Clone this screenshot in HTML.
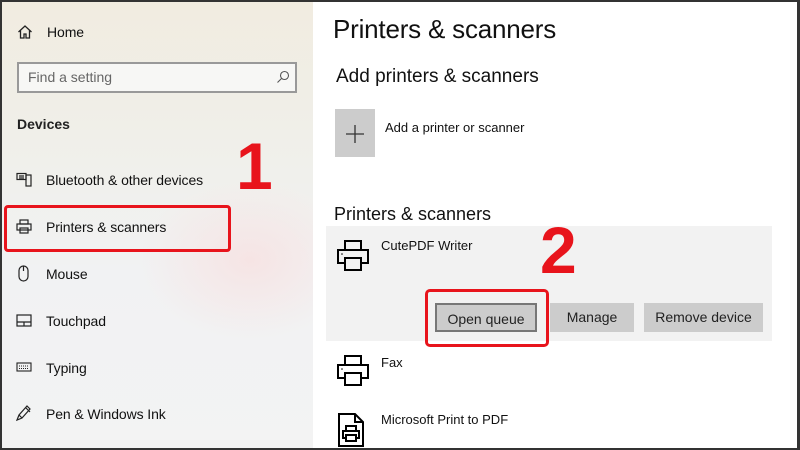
<!DOCTYPE html>
<html><head><meta charset="utf-8"><style>
*{margin:0;padding:0;box-sizing:border-box}
body{width:800px;height:450px;overflow:hidden;font-family:"Liberation Sans",sans-serif;color:#000;position:relative;background:#fff}
.side{position:absolute;left:0;top:0;width:313px;height:450px;background:radial-gradient(ellipse 110px 80px at 250px 260px,#f6e4e4,rgba(246,228,228,0)),linear-gradient(180deg,#f1ece0 0%,#f0efe9 30%,#f1f2f3 60%,#f3f3f3 100%)}
.a{position:absolute;white-space:nowrap}
.t{font-size:14px;color:#111;letter-spacing:-0.1px}
.frame{position:absolute;left:0;top:0;width:800px;height:450px;border:2px solid #333;border-right-width:3px;pointer-events:none}
.btn{position:absolute;top:303px;height:29px;background:#ccc;font-size:14px;text-align:center;line-height:29px;color:#222}
svg{position:absolute}
</style></head><body>
<div class="side"></div>
<svg style="left:17px;top:24px" width="16" height="16" viewBox="0 0 16 16" fill="none" stroke="#222" stroke-width="1.3"><path d="M1.5 8L8 2l6.5 6M3.5 6.5V14h3.5v-4h2v4h3.5V6.5"/></svg>
<div class="a t" style="left:47px;top:24px;font-size:14px">Home</div>
<div class="a" style="left:17px;top:62px;width:280px;height:31px;border:2px solid #999;background:#f7f7f5"></div>
<div class="a" style="left:28px;top:69px;font-size:14px;color:#666">Find a setting</div>
<svg style="left:276px;top:70px" width="14" height="14" viewBox="0 0 14 14" fill="none" stroke="#555" stroke-width="1.1"><circle cx="8.5" cy="5.5" r="4"/><path d="M5.5 8.5L1.5 12.5"/></svg>
<div class="a" style="left:17px;top:116px;font-size:14px;font-weight:bold;color:#222">Devices</div>
<svg style="left:16px;top:172px" width="16" height="16" viewBox="0 0 16 16" fill="none" stroke="#222" stroke-width="1.2"><rect x="1" y="1.5" width="9" height="6"/><rect x="10" y="3" width="5" height="11"/><path d="M3 4h5M3 6h5"/></svg>
<div class="a t" style="left:46px;top:172px">Bluetooth &amp; other devices</div>
<svg style="left:16px;top:219px" width="16" height="16" viewBox="0 0 16 16" fill="none" stroke="#222" stroke-width="1.2"><rect x="4" y="1" width="8" height="4"/><rect x="1" y="5" width="14" height="6"/><rect x="4" y="9" width="8" height="5"/></svg>
<div class="a t" style="left:46px;top:219px">Printers &amp; scanners</div>
<svg style="left:16px;top:265px" width="16" height="18" viewBox="0 0 16 18" fill="none" stroke="#222" stroke-width="1.2"><rect x="3" y="1" width="9" height="15" rx="4.5"/><path d="M7.5 1v5"/></svg>
<div class="a t" style="left:46px;top:266px">Mouse</div>
<svg style="left:16px;top:313px" width="16" height="16" viewBox="0 0 16 16" fill="none" stroke="#222" stroke-width="1.2"><rect x="1" y="2" width="14" height="11"/><path d="M1 9h14M8 9v4"/></svg>
<div class="a t" style="left:46px;top:313px">Touchpad</div>
<svg style="left:16px;top:361px" width="16" height="14" viewBox="0 0 16 14" fill="none" stroke="#222" stroke-width="1.1"><rect x="1" y="2" width="14" height="8"/><path d="M3 5h10M3 7.5h10" stroke-dasharray="1 1"/></svg>
<div class="a t" style="left:46px;top:360px">Typing</div>
<svg style="left:15px;top:404px" width="18" height="18" viewBox="0 0 18 18" fill="none" stroke="#222" stroke-width="1.2"><path d="M2 16l2-5 8-9 3 3-8 9zM4 11l3 3M11 4l4 4"/></svg>
<div class="a t" style="left:46px;top:406px">Pen &amp; Windows Ink</div>
<div class="a" style="left:4px;top:205px;width:227px;height:47px;border:3px solid #e8141c;border-radius:4px"></div>
<div class="a" style="left:236px;top:128px;font-size:66px;font-weight:bold;color:#e8141c">1</div>

<div class="a" style="left:333px;top:14px;font-size:26px;color:#111;letter-spacing:-0.2px">Printers &amp; scanners</div>
<div class="a" style="left:336px;top:66px;font-size:19px;color:#111">Add printers &amp; scanners</div>
<div class="a" style="left:335px;top:109px;width:40px;height:48px;background:#ccc"></div>
<svg style="left:345px;top:124px" width="20" height="20" viewBox="0 0 20 20" stroke="#333" stroke-width="1.3"><path d="M10 1v18M1 10h18"/></svg>
<div class="a" style="left:385px;top:120px;font-size:13px;color:#111">Add a printer or scanner</div>
<div class="a" style="left:334px;top:204px;font-size:18px;color:#111">Printers &amp; scanners</div>
<div class="a" style="left:326px;top:226px;width:446px;height:115px;background:#f2f2f2"></div>
<svg style="left:336px;top:240px" width="34" height="32" viewBox="0 0 34 32" fill="none" stroke="#000" stroke-width="2"><rect x="9" y="1" width="16" height="9"/><rect x="2" y="10" width="30" height="13"/><rect x="9" y="18" width="16" height="12" fill="#f2f2f2"/><circle cx="6" cy="14" r=".8" fill="#000" stroke="none"/></svg>
<div class="a" style="left:381px;top:238px;font-size:13px;color:#111">CutePDF Writer</div>
<div class="btn" style="left:435px;width:102px;border:2px solid #777">Open queue</div>
<div class="btn" style="left:550px;width:84px">Manage</div>
<div class="btn" style="left:644px;width:119px">Remove device</div>
<div class="a" style="left:425px;top:289px;width:124px;height:58px;border:3px solid #e8141c;border-radius:5px"></div>
<div class="a" style="left:540px;top:212px;font-size:66px;font-weight:bold;color:#e8141c">2</div>
<svg style="left:336px;top:355px" width="34" height="32" viewBox="0 0 34 32" fill="none" stroke="#000" stroke-width="2"><rect x="9" y="1" width="16" height="9"/><rect x="2" y="10" width="30" height="13"/><rect x="9" y="18" width="16" height="12" fill="#fff"/><circle cx="6" cy="14" r=".8" fill="#000" stroke="none"/></svg>
<div class="a" style="left:381px;top:355px;font-size:13px;color:#111">Fax</div>
<svg style="left:338px;top:413px" width="26" height="34" viewBox="0 0 26 34" fill="none" stroke="#000" stroke-width="2"><path d="M1 1h16l8 8v24H1z"/><path d="M17 1v8h8"/><rect x="8" y="13" width="10" height="5"/><rect x="5" y="18" width="16" height="7"/><rect x="8" y="22" width="10" height="6" fill="#fff"/></svg>
<div class="a" style="left:381px;top:412px;font-size:13px;color:#111">Microsoft Print to PDF</div>
<div class="frame"></div>
</body></html>
